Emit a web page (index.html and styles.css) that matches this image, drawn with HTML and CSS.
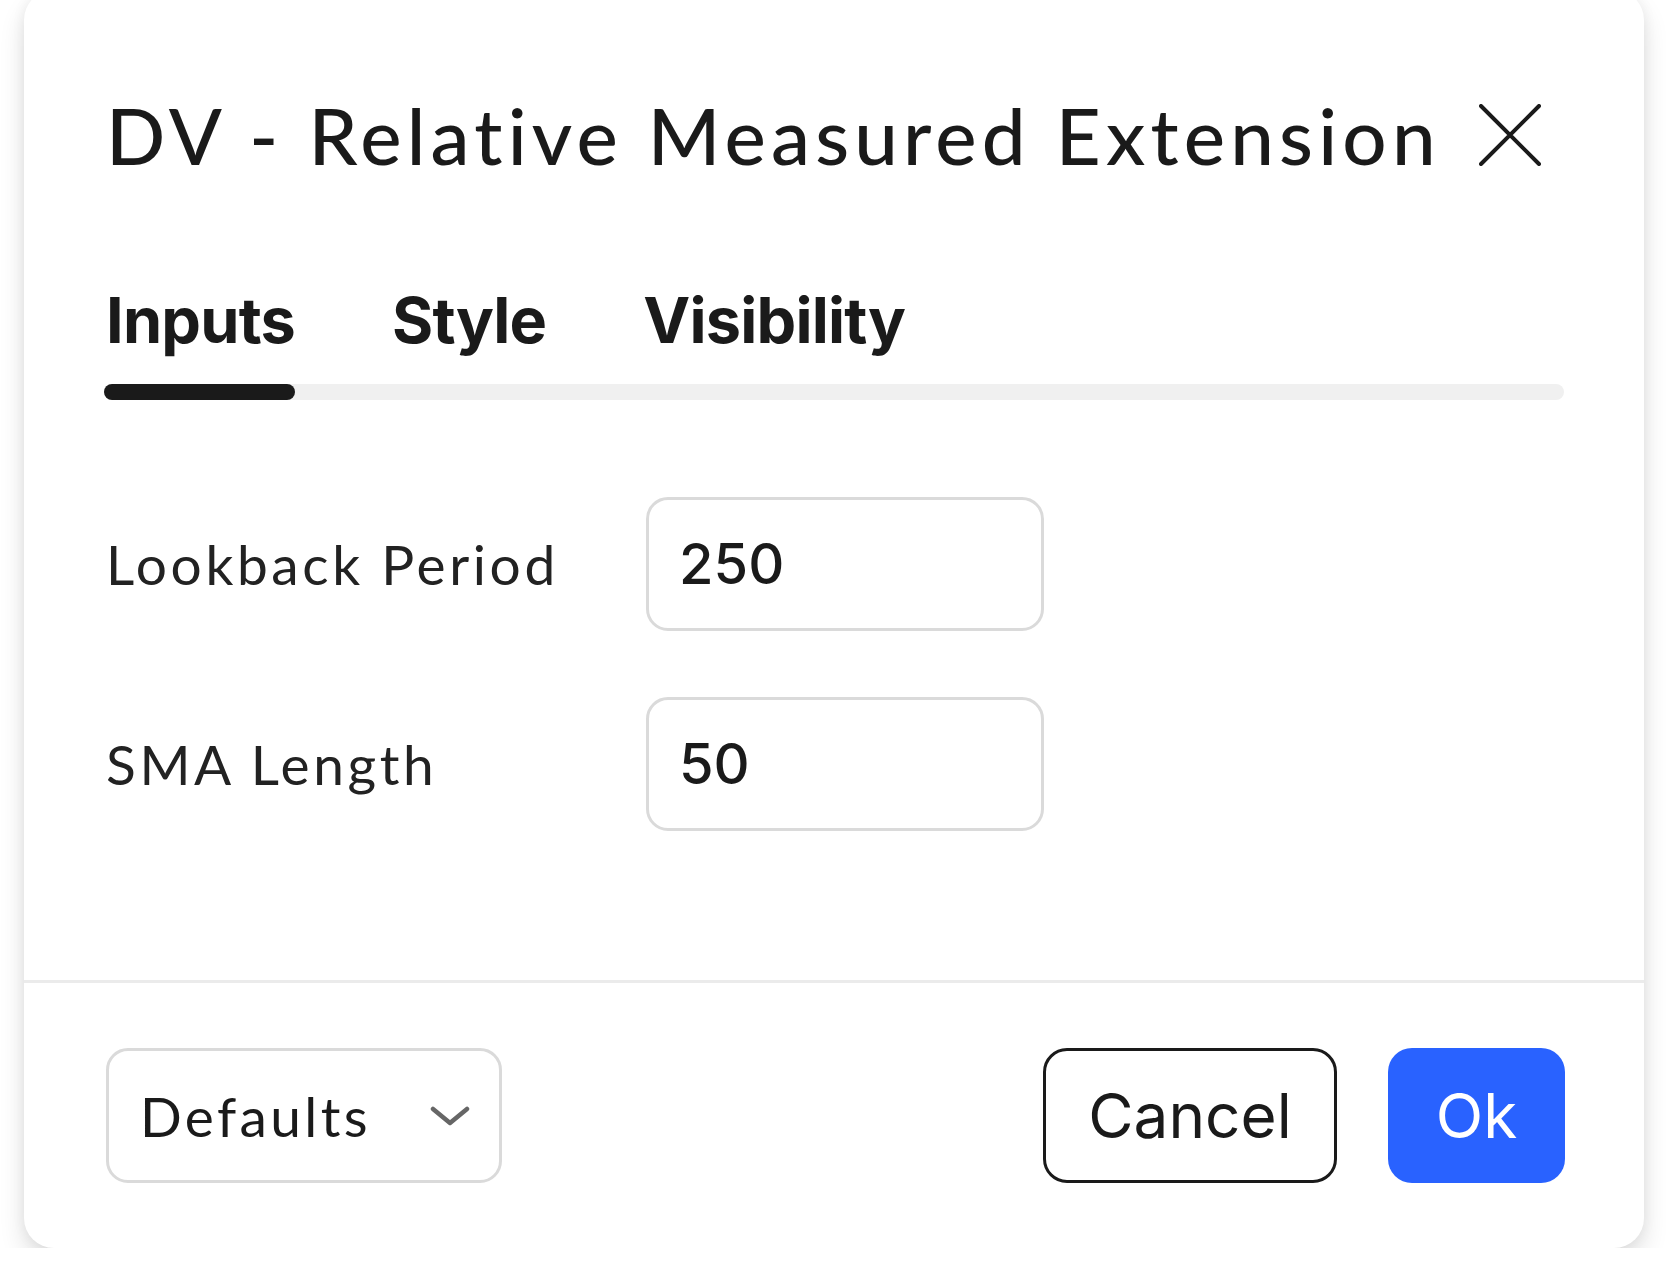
FILE: index.html
```html
<!DOCTYPE html>
<html lang="en">
<head>
    <meta charset="UTF-8">
    <meta name="viewport" content="width=device-width, initial-scale=1.0">
    <title>DV - Relative Measured Extension</title>
    <link rel="stylesheet" href="styles.css">
</head>
<body>
    <div class="dialog">
        <div class="dialog-header">
            <h1 class="dialog-title">DV - Relative Measured Extension</h1>
            <button class="close-btn" aria-label="Close">
                <svg viewBox="0 0 62 62" width="62" height="62">
                    <path d="M2 2 L60 60 M60 2 L2 60" stroke="#1a1a1a" stroke-width="4" stroke-linecap="round" fill="none"/>
                </svg>
            </button>
        </div>

        <div class="tabs">
            <span class="tab active">Inputs</span>
            <span class="tab">Style</span>
            <span class="tab">Visibility</span>
        </div>
        <div class="tab-track"><div class="tab-indicator"></div></div>

        <div class="dialog-body">
            <div class="field">
                <label class="field-label">Lookback Period</label>
                <input class="field-input" type="text" value="250">
            </div>
            <div class="field">
                <label class="field-label">SMA Length</label>
                <input class="field-input" type="text" value="50">
            </div>
        </div>

        <div class="dialog-footer">
            <div class="select">
                <span>Defaults</span>
                <svg viewBox="0 0 40 20" width="40" height="20">
                    <path d="M3 3 L20 17 L37 3" stroke="#666" stroke-width="4.5" stroke-linecap="round" stroke-linejoin="round" fill="none"/>
                </svg>
            </div>
            <div class="actions">
                <button class="btn btn-cancel">Cancel</button>
                <button class="btn btn-ok">Ok</button>
            </div>
        </div>
    </div>
</body>
</html>
```

FILE: styles.css
```css
body {
    margin: 0;
    background: #fff;
    font-family: Inter, "Noto Sans", sans-serif;
    color: #1a1a1a;
    overflow: hidden;
}
.dialog {
    margin: -10px 0 0 24px;
    width: 1620px;
    height: 1258px;
    box-sizing: border-box;
    background: #fff;
    border-radius: 30px;
    box-shadow: 0 14px 26px rgba(0, 0, 0, 0.12), 0 0 14px rgba(0, 0, 0, 0.06);
    display: flex;
    flex-direction: column;
    padding-top: 106px;
}
.dialog-header {
    display: flex;
    align-items: center;
    padding: 0 80px 0 82px;
    height: 78px;
}
.dialog-title {
    margin: 0;
    font-family: Lato, sans-serif;
    font-weight: 500;
    font-size: 78px;
    line-height: 1;
    letter-spacing: 5.2px;
}
.close-btn {
    margin-left: 38px;
    background: none;
    border: none;
    padding: 0;
    width: 62px;
    height: 62px;
    display: flex;
}
.tabs {
    display: flex;
    gap: 97px;
    padding: 0 82px;
    margin-top: 115px;
}
.tab {
    font-weight: 700;
    font-size: 63px;
    line-height: 1;
    letter-spacing: -0.8px;
}
.tab-track {
    margin: 32px 80px 0 80px;
    height: 16px;
    border-radius: 8px;
    background: #f0f0f0;
}
.tab-indicator {
    width: 191px;
    height: 16px;
    border-radius: 8px;
    background: #1a1a1a;
}
.dialog-body {
    flex: 1;
    padding: 97px 82px 0;
    display: flex;
    flex-direction: column;
    gap: 66px;
}
.field {
    display: flex;
    align-items: center;
}
.field-label {
    width: 540px;
    font-family: Lato, sans-serif;
    font-weight: 400;
    font-size: 55px;
    letter-spacing: 3.6px;
    color: #222;
}
.field-input {
    width: 398px;
    height: 134px;
    box-sizing: border-box;
    border: 3px solid #dadada;
    border-radius: 22px;
    padding: 0 0 0 30px;
    font-family: Inter, sans-serif;
    font-size: 56px;
    font-weight: 500;
    color: #1a1a1a;
    outline: none;
}
.dialog-footer {
    border-top: 3px solid #ebebeb;
    padding: 65px 79px 65px 82px;
    display: flex;
    align-items: center;
    justify-content: space-between;
}
.select {
    width: 396px;
    height: 135px;
    box-sizing: border-box;
    border: 3px solid #dadada;
    border-radius: 22px;
    display: flex;
    align-items: center;
    justify-content: space-between;
    padding: 0 29px 0 31px;
    font-family: Lato, sans-serif;
    font-size: 55px;
    letter-spacing: 3.4px;
}
.actions {
    display: flex;
    gap: 51px;
}
.btn {
    height: 135px;
    box-sizing: border-box;
    border-radius: 24px;
    font-family: Inter, sans-serif;
    font-size: 62px;
    font-weight: 400;
    padding: 0;
    cursor: pointer;
}
.btn-cancel {
    width: 294px;
    background: #fff;
    border: 3px solid #1a1a1a;
    color: #1a1a1a;
}
.btn-ok {
    width: 177px;
    background: #2962ff;
    border: none;
    color: #fff;
}
```
